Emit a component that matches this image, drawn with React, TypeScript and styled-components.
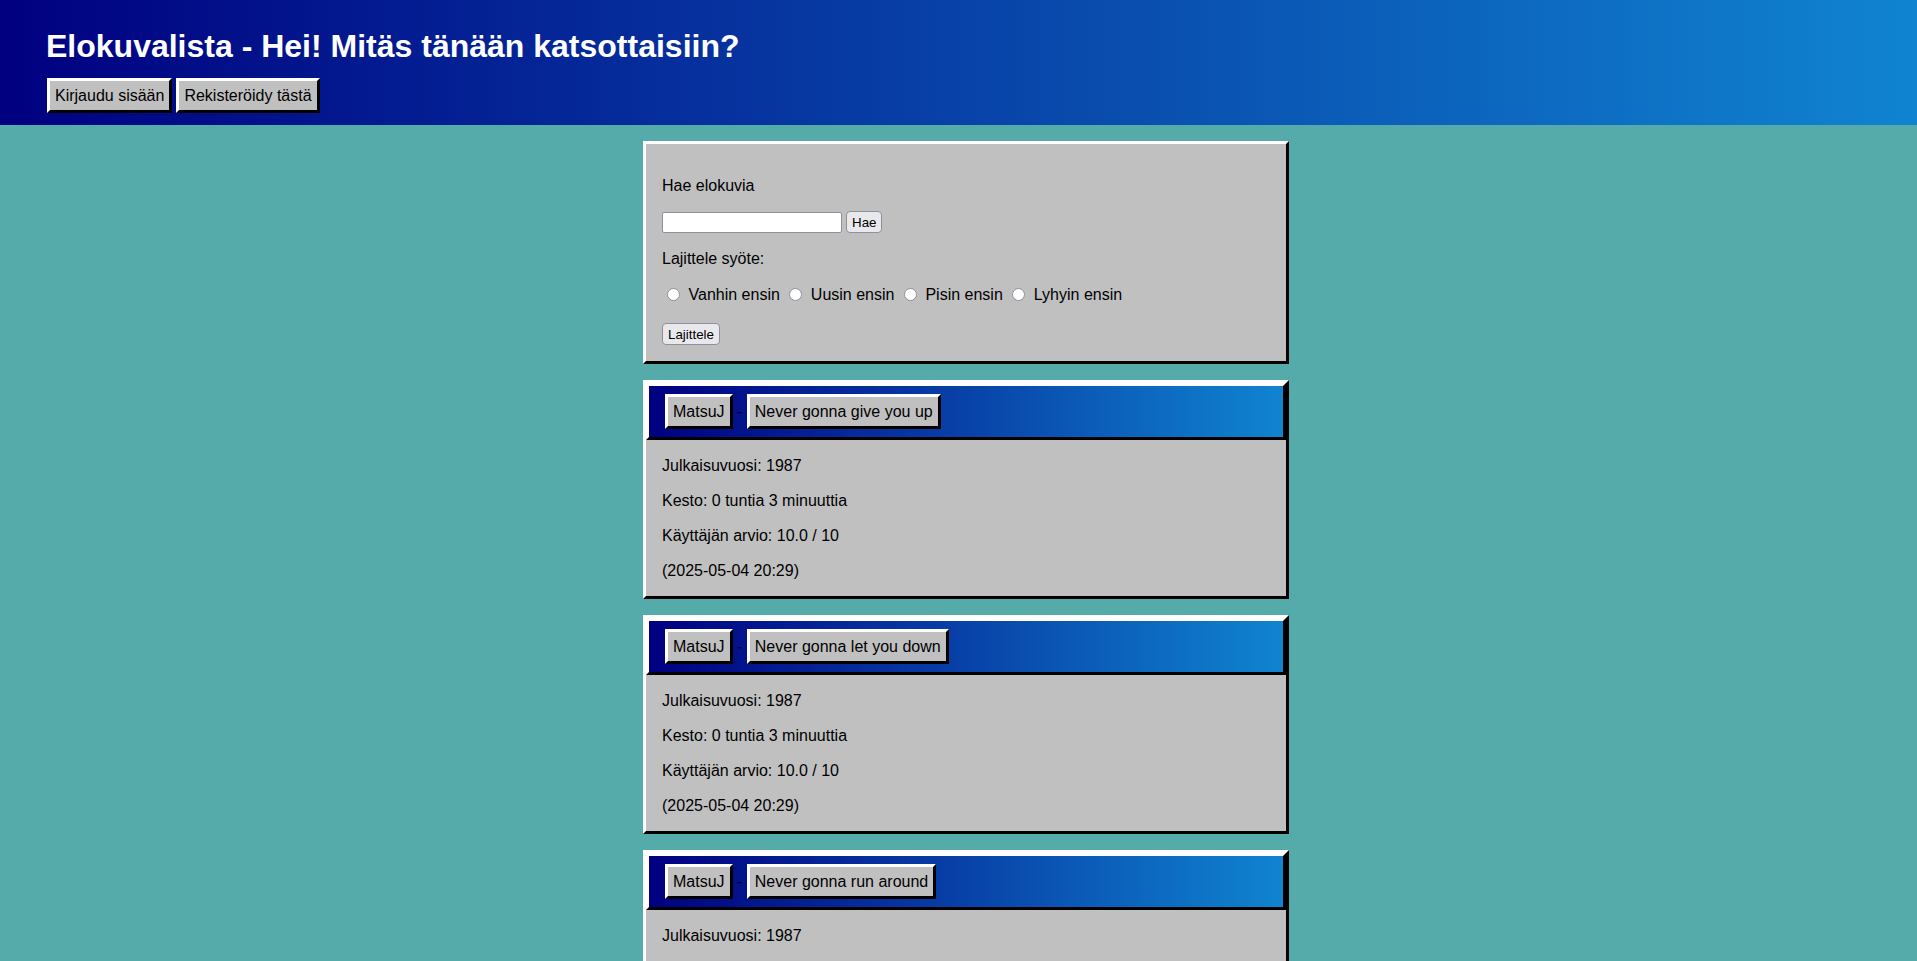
import React from "react";
import styled, { createGlobalStyle } from "styled-components";

const GlobalStyle = createGlobalStyle`
  html, body {
    margin: 0;
    padding: 0;
    scrollbar-width: none;
  }
  html::-webkit-scrollbar, body::-webkit-scrollbar { display: none; }
  body {
    background: rgb(85, 170, 170);
    font-family: "Liberation Sans", Arial, sans-serif;
    font-size: 16px;
    color: #000;
  }
`;

const Header = styled.header`
  background: linear-gradient(to right, #000080, #1084d0);
  padding: 28px 46px 12px 46px;
`;

const Title = styled.h1`
  margin: 0 0 13px;
  font-size: 32px;
  line-height: 37px;
  font-weight: bold;
  color: #fff;
`;

const NavRow = styled.div`
  display: flex;
  gap: 4px;
  margin-left: 1px;
`;

const RetroButton = styled.button`
  font-family: "Liberation Sans", Arial, sans-serif;
  font-size: 16px;
  line-height: 19px;
  color: #000;
  background: #c0c0c0;
  padding: 5px;
  border-width: 3px;
  border-style: solid;
  border-color: #fff #000 #000 #fff;
  border-radius: 0;
  cursor: pointer;
`;

const Main = styled.main`
  display: flex;
  flex-direction: column;
  align-items: center;
  gap: 16px;
  padding: 16px 0 16px 15px;
`;

const Panel = styled.section`
  width: 640px;
  background: #c0c0c0;
  border-width: 3px;
  border-style: solid;
  border-color: #fff #000 #000 #fff;
`;

const SearchPanel = styled(Panel)`
  padding: 16px;
  box-sizing: content-box;
  width: 608px;
  display: flex;
  flex-direction: column;
`;

const TextLine = styled.p`
  margin: 16px 0 0;
  line-height: 19px;
`;

const SearchRow = styled.div`
  margin-top: 16px;
  height: 22px;
  display: flex;
  align-items: flex-start;
  gap: 4px;
`;

const TextInput = styled.input`
  box-sizing: border-box;
  width: 180px;
  height: 21px;
  margin-top: 1px;
  padding: 1px 3px;
  background: #fff;
  border: 1px solid #8f8f9d;
  border-radius: 2px;
  font-family: "Liberation Sans", Arial, sans-serif;
  font-size: 13.333px;
`;

const SmallButton = styled.button<{ $mt?: number }>`
  box-sizing: border-box;
  height: 22px;
  margin-top: ${(p) => p.$mt ?? 0}px;
  padding: 0 5px;
  background: #e9e9ed;
  border: 1px solid #8f8f9d;
  border-radius: 4px;
  font-family: "Liberation Sans", Arial, sans-serif;
  font-size: 13.333px;
  color: #000;
  cursor: pointer;
`;

const RadioRow = styled.div`
  margin-top: 16px;
  height: 20px;
  display: flex;
  align-items: center;
  line-height: 19px;
`;

const Radio = styled.input`
  appearance: none;
  -webkit-appearance: none;
  box-sizing: border-box;
  width: 13px;
  height: 13px;
  margin: 0 3px 0 5px;
  border: 1px solid #8f8f9d;
  border-radius: 50%;
  background: #fff;
`;

const RadioLabel = styled.label`
  margin-left: 5.5px;
  margin-right: 4.5px;
`;

const ButtonRow = styled.div`
  margin-top: 16px;
  height: 25px;
  display: flex;
  align-items: flex-start;
`;

const CardHeader = styled.div`
  background: linear-gradient(to right, #000080, #1084d0);
  border-width: 3px;
  border-style: solid;
  border-color: #fff #000 #000 #fff;
  padding: 8px 16px;
  display: flex;
  align-items: center;
`;

const Separator = styled.span`
  white-space: pre;
  color: #000;
  line-height: 19px;
`;

const CardBody = styled.div`
  padding: 16px;
  display: flex;
  flex-direction: column;
  gap: 16px;
`;

const InfoLine = styled.p`
  margin: 0;
  line-height: 19px;
`;

type Movie = {
  user: string;
  title: string;
  year: number;
  hours: number;
  minutes: number;
  rating: string;
  date: string;
};

const movies: Movie[] = [
  { user: "MatsuJ", title: "Never gonna give you up", year: 1987, hours: 0, minutes: 3, rating: "10.0", date: "2025-05-04 20:29" },
  { user: "MatsuJ", title: "Never gonna let you down", year: 1987, hours: 0, minutes: 3, rating: "10.0", date: "2025-05-04 20:29" },
  { user: "MatsuJ", title: "Never gonna run around", year: 1987, hours: 0, minutes: 3, rating: "10.0", date: "2025-05-04 20:29" },
];

const sortOptions = ["Vanhin ensin", "Uusin ensin", "Pisin ensin", "Lyhyin ensin"];

const MovieCard: React.FC<{ movie: Movie }> = ({ movie }) => (
  <Panel>
    <CardHeader>
      <RetroButton>{movie.user}</RetroButton>
      <Separator> - </Separator>
      <RetroButton>{movie.title}</RetroButton>
    </CardHeader>
    <CardBody>
      <InfoLine>Julkaisuvuosi: {movie.year}</InfoLine>
      <InfoLine>
        Kesto: {movie.hours} tuntia {movie.minutes} minuuttia
      </InfoLine>
      <InfoLine>Käyttäjän arvio: {movie.rating} / 10</InfoLine>
      <InfoLine>({movie.date})</InfoLine>
    </CardBody>
  </Panel>
);

export default function App() {
  return (
    <>
      <GlobalStyle />
      <Header>
        <Title>Elokuvalista - Hei! Mitäs tänään katsottaisiin?</Title>
        <NavRow>
          <RetroButton>Kirjaudu sisään</RetroButton>
          <RetroButton>Rekisteröidy tästä</RetroButton>
        </NavRow>
      </Header>
      <Main>
        <SearchPanel>
          <TextLine>Hae elokuvia</TextLine>
          <SearchRow>
            <TextInput type="text" />
            <SmallButton>Hae</SmallButton>
          </SearchRow>
          <TextLine>Lajittele syöte:</TextLine>
          <RadioRow>
            {sortOptions.map((opt, i) => (
              <React.Fragment key={opt}>
                <Radio type="radio" name="sort" id={`sort-${i}`} />
                <RadioLabel htmlFor={`sort-${i}`}>{opt}</RadioLabel>
              </React.Fragment>
            ))}
          </RadioRow>
          <ButtonRow>
            <SmallButton $mt={3}>Lajittele</SmallButton>
          </ButtonRow>
        </SearchPanel>
        {movies.map((m) => (
          <MovieCard key={m.title} movie={m} />
        ))}
      </Main>
    </>
  );
}
